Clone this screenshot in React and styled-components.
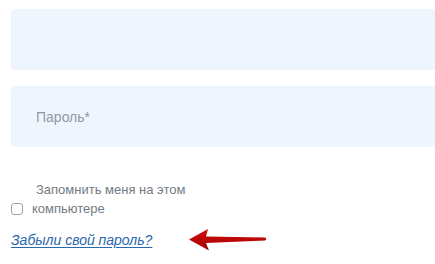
import React from "react";
import styled, { createGlobalStyle } from "styled-components";

const Global = createGlobalStyle`
	html, body {
		margin: 0;
		padding: 0;
		background: #fff;
		overflow: hidden;
	}
	body {
		font-family: "Helvetica Neue", "Liberation Sans", Arial, sans-serif;
	}
`;

const Page = styled.div`
	width: 100%;
	overflow: hidden;
`;

const Form = styled.form`
	width: calc(100% + 40px);
	box-sizing: border-box;
	padding: 9px 0 0 11px;
	display: flex;
	flex-direction: column;
`;

const Field = styled.input`
	box-sizing: border-box;
	width: 100%;
	height: 61px;
	margin-bottom: 16px;
	border: none;
	border-radius: 4px;
	background: #eff5fd;
	padding: 0 25px;
	font-family: inherit;
	font-size: 14px;
	color: #333;
	outline: none;

	&::placeholder {
		color: #8e99a6;
	}
`;

const Remember = styled.label`
	display: flex;
	align-items: flex-end;
	margin-top: 17px;
	width: 190px;
	font-size: 13px;
	line-height: 19px;
	color: #737b84;
`;

const Box = styled.span`
	flex: 0 0 auto;
	width: 10px;
	height: 10px;
	border: 1px solid #9da4ab;
	border-radius: 3px;
	background: #fff;
	margin: 0 9px 3px 0;
`;

const LabelText = styled.span`
	text-indent: 4px;
`;

const LinkRow = styled.div`
	display: flex;
	align-items: center;
	margin-top: 10px;
	gap: 37px;
`;

const Forgot = styled.a`
	font-size: 14px;
	font-style: italic;
	color: #2b67ad;
	text-decoration: underline;
	text-underline-offset: 2px;
	line-height: 18px;
`;

const Arrow = () => (
	<svg width="80" height="24" viewBox="0 0 80 24">
		<defs>
			<linearGradient id="ar" x1="0" y1="0" x2="0" y2="1">
				<stop offset="0" stopColor="#d3100c" />
				<stop offset="1" stopColor="#a30000" />
			</linearGradient>
		</defs>
		<path
			d="M0 11.5 L19 1 L17 8.5 L76 9.5 Q78.5 11 76 12.5 L17 15 L20 22.5 Z"
			fill="url(#ar)"
		/>
	</svg>
);

export default function App() {
	return (
		<Page>
			<Global />
			<Form>
				<Field type="text" />
				<Field type="password" placeholder="Пароль*" />
				<Remember>
					<Box />
					<LabelText>Запомнить меня на этом компьютере</LabelText>
				</Remember>
				<LinkRow>
					<Forgot href="#">Забыли свой пароль?</Forgot>
					<Arrow />
				</LinkRow>
			</Form>
		</Page>
	);
}
